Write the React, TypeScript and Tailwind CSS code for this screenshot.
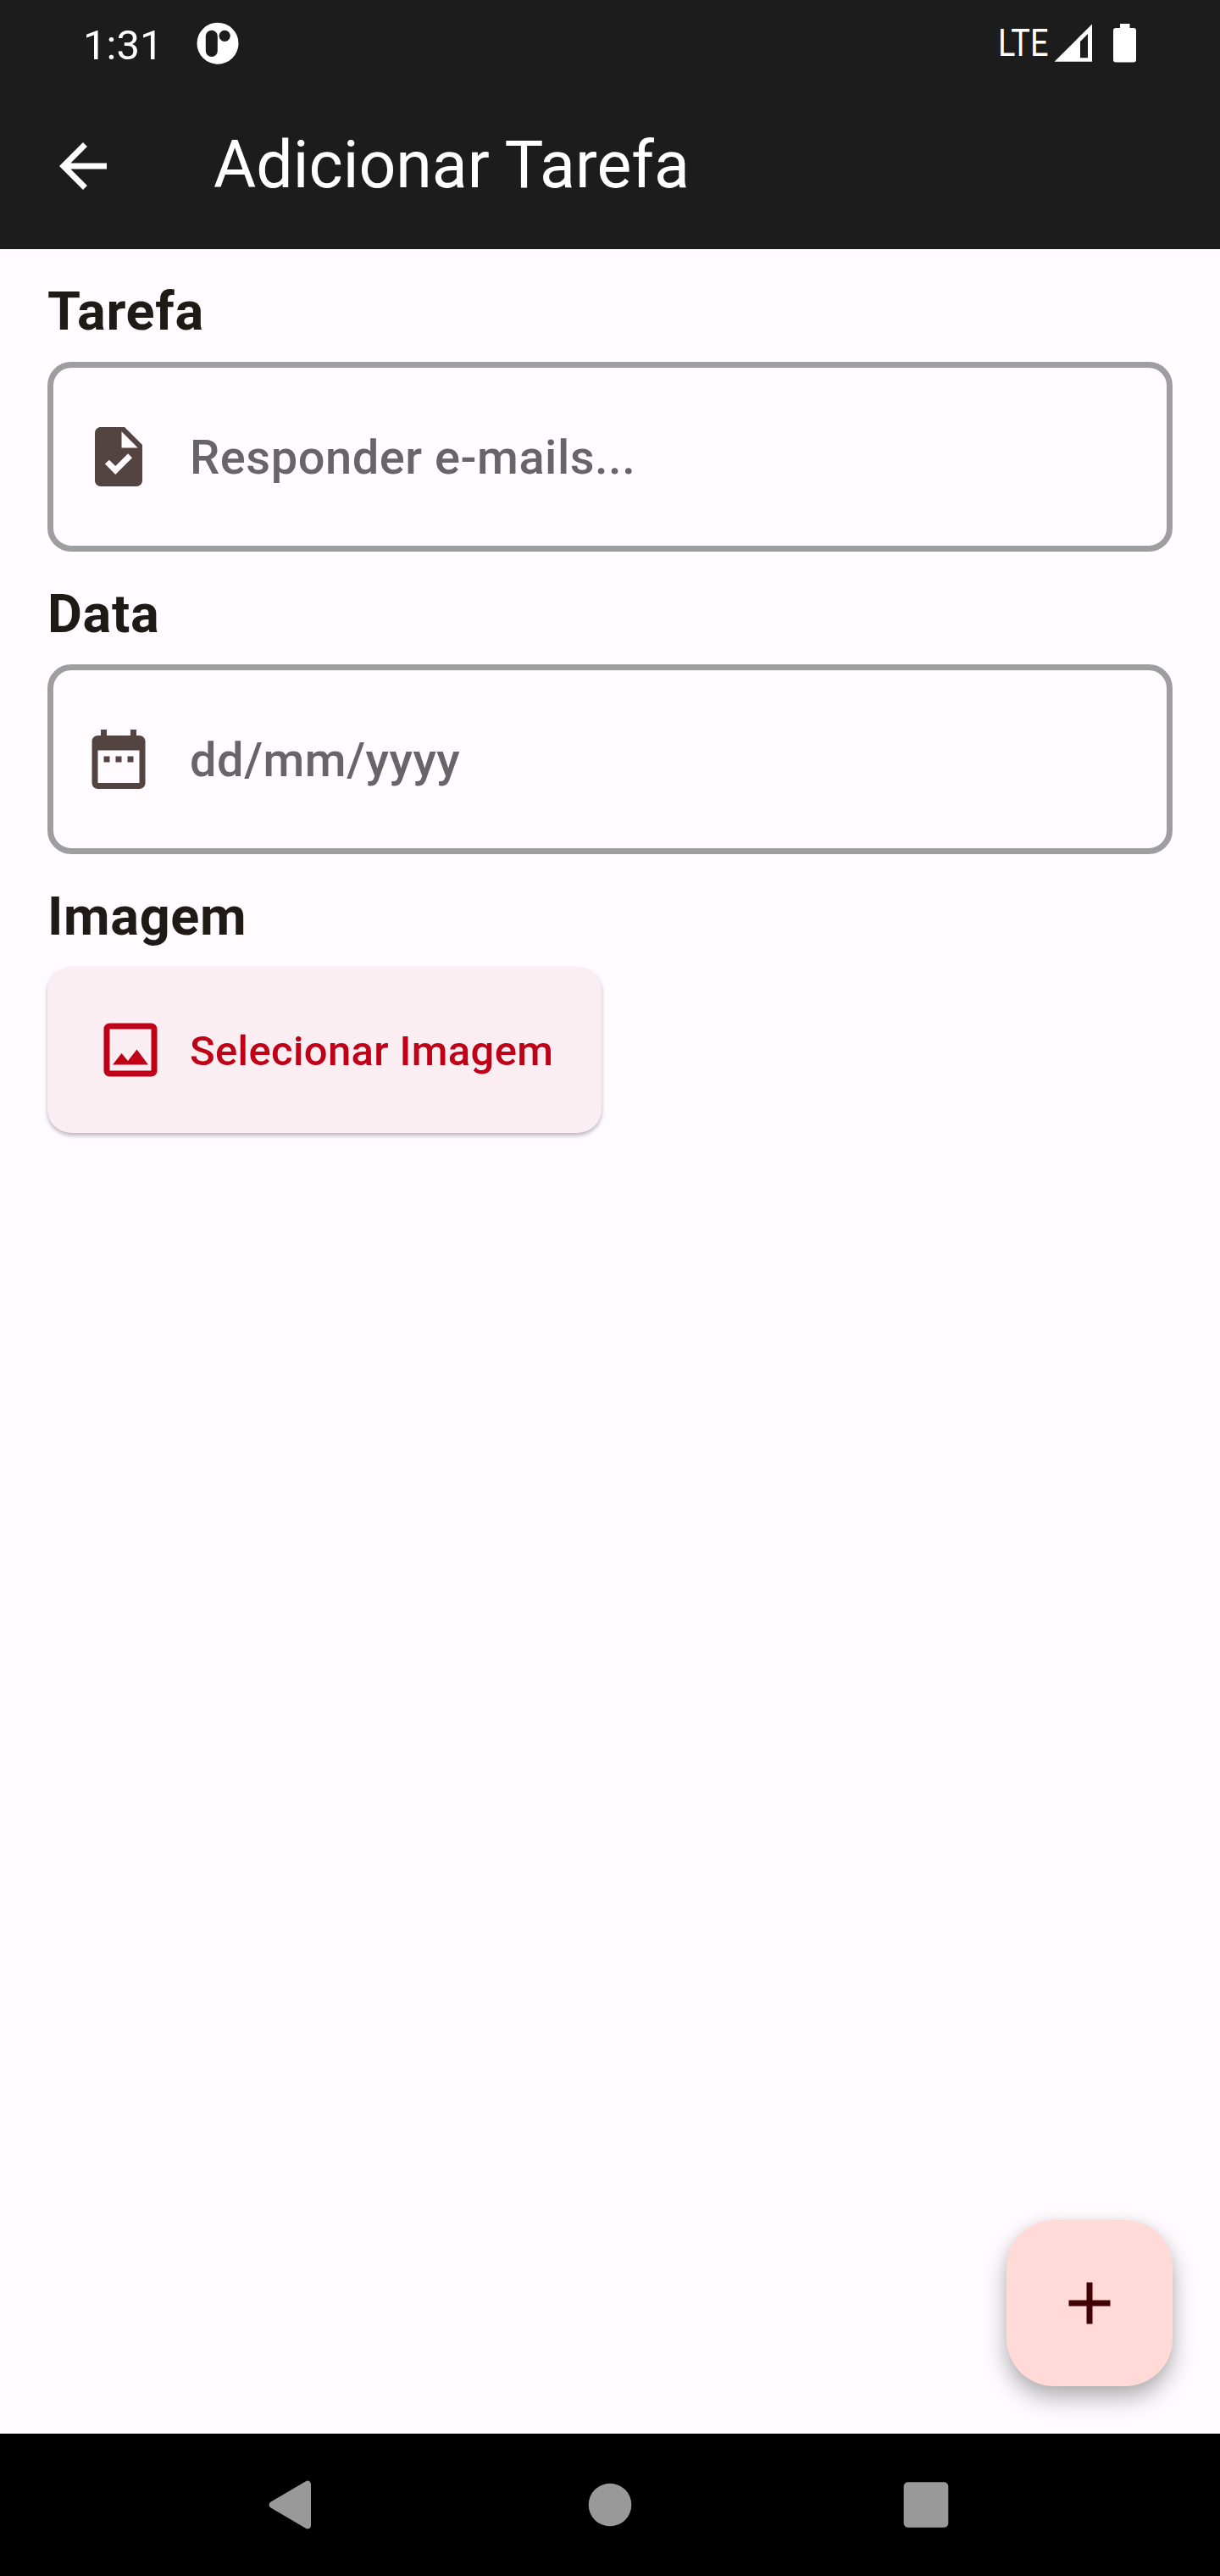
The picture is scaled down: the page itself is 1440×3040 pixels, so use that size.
import React from "react";
import { MdArrowBack, MdTask, MdDateRange, MdOutlineImage, MdAdd } from "react-icons/md";

function StatusBar() {
  return (
    <div className="flex h-[98px] items-start justify-between pl-[98px] pr-[98px]">
      <div className="flex">
        <span className="mt-[25px] w-[91px] whitespace-nowrap text-[49px] leading-[58px]">1:31</span>
        <svg className="ml-[43px] mt-[26px]" width="50" height="50" viewBox="232 26 50 50">
          <circle cx="257" cy="51.2" r="24.5" fill="#fff" />
          <rect x="242.8" y="35.7" width="14" height="31.3" rx="7" fill="#1c1c1c" />
          <circle cx="265.2" cy="42.3" r="6.6" fill="#1c1c1c" />
        </svg>
      </div>
      <div className="flex">
        <span className="mt-[25px] w-[66px] origin-left scale-x-[0.87] whitespace-nowrap text-[43.5px] leading-[54px]">LTE</span>
        <svg width="98" height="84" viewBox="1245 0 98 84" fill="#fff">
          <path fillRule="evenodd" d="M1245.5 72.7 1290 28.5V72.7ZM1276 49V68.3H1285V40Z" />
          <path d="M1323 28h11.5v5h4.5a3 3 0 0 1 3 3v34.5a3 3 0 0 1-3 3h-21a3 3 0 0 1-3-3V36a3 3 0 0 1 3-3h5Z" />
        </svg>
      </div>
    </div>
  );
}

function Label({ children }: { children: React.ReactNode }) {
  return (
    <h2 className="mb-[17px] mt-[32px] text-[63px] font-bold leading-[84px] tracking-[0.65px] text-[#201a17]">
      {children}
    </h2>
  );
}

function Field({ icon, placeholder }: { icon: React.ReactNode; placeholder: string }) {
  return (
    <div className="flex h-[224px] items-center gap-[42px] rounded-[28px] border-[7px] border-[#9e9e9e] pl-[35px]">
      {icon}
      <input
        className="mt-[2px] min-w-0 flex-1 bg-transparent text-[56px] font-medium leading-[84px] tracking-[0.525px] outline-none placeholder:text-[#676568]"
        placeholder={placeholder}
      />
    </div>
  );
}

export default function App() {
  return (
    <div className="flex h-[3040px] w-[1440px] flex-col bg-[#fffbff] font-['Roboto',sans-serif]">
      <header className="h-[294px] bg-[#1c1c1c] text-white">
        <StatusBar />
        <div className="flex h-[196px] items-center gap-[112px] pl-[56px]">
          <MdArrowBack size={84} />
          <h1 className="-mt-[2px] text-[77px] leading-[98px]">Adicionar Tarefa</h1>
        </div>
      </header>

      <main className="flex flex-1 flex-col px-[56px]">
        <Label>Tarefa</Label>
        <Field icon={<MdTask size={84} color="#534341" />} placeholder="Responder e-mails..." />
        <Label>Data</Label>
        <Field icon={<MdDateRange size={84} color="#534341" />} placeholder="dd/mm/yyyy" />
        <Label>Imagem</Label>
        <button className="flex h-[196px] w-[654px] items-center gap-[28px] rounded-[28px] bg-[#faeef2] pl-[56px] text-[#c00016] shadow-[0_3px_5px_rgba(0,0,0,0.28)]">
          <MdOutlineImage size={84} />
          <span className="mt-[4px] whitespace-nowrap text-[49px] font-medium leading-[70px] tracking-[0.35px]">
            Selecionar Imagem
          </span>
        </button>
        <button
          aria-label="Adicionar"
          className="mb-[56px] ml-auto mt-auto flex size-[196px] items-center justify-center rounded-[56px] bg-[#ffdad6] text-[#410003] shadow-[0_14px_28px_rgba(0,0,0,0.3),0_0_14px_rgba(0,0,0,0.05)]"
        >
          <MdAdd size={84} />
        </button>
      </main>

      <nav className="flex h-[168px] items-center bg-black pl-[301px]">
        <svg width="84" height="84" viewBox="0 0 84 84" fill="#999">
          <path d="M20.7 42 62 17.7V66.3Z" stroke="#999" strokeWidth="8" strokeLinejoin="round" />
        </svg>
        <svg className="ml-[293px]" width="84" height="84" viewBox="0 0 84 84" fill="#999">
          <circle cx="42" cy="42" r="25.3" />
        </svg>
        <svg className="ml-[289px]" width="84" height="84" viewBox="0 0 84 84" fill="#999">
          <rect x="15.7" y="15.3" width="52.6" height="53.4" rx="5" />
        </svg>
      </nav>
    </div>
  );
}
